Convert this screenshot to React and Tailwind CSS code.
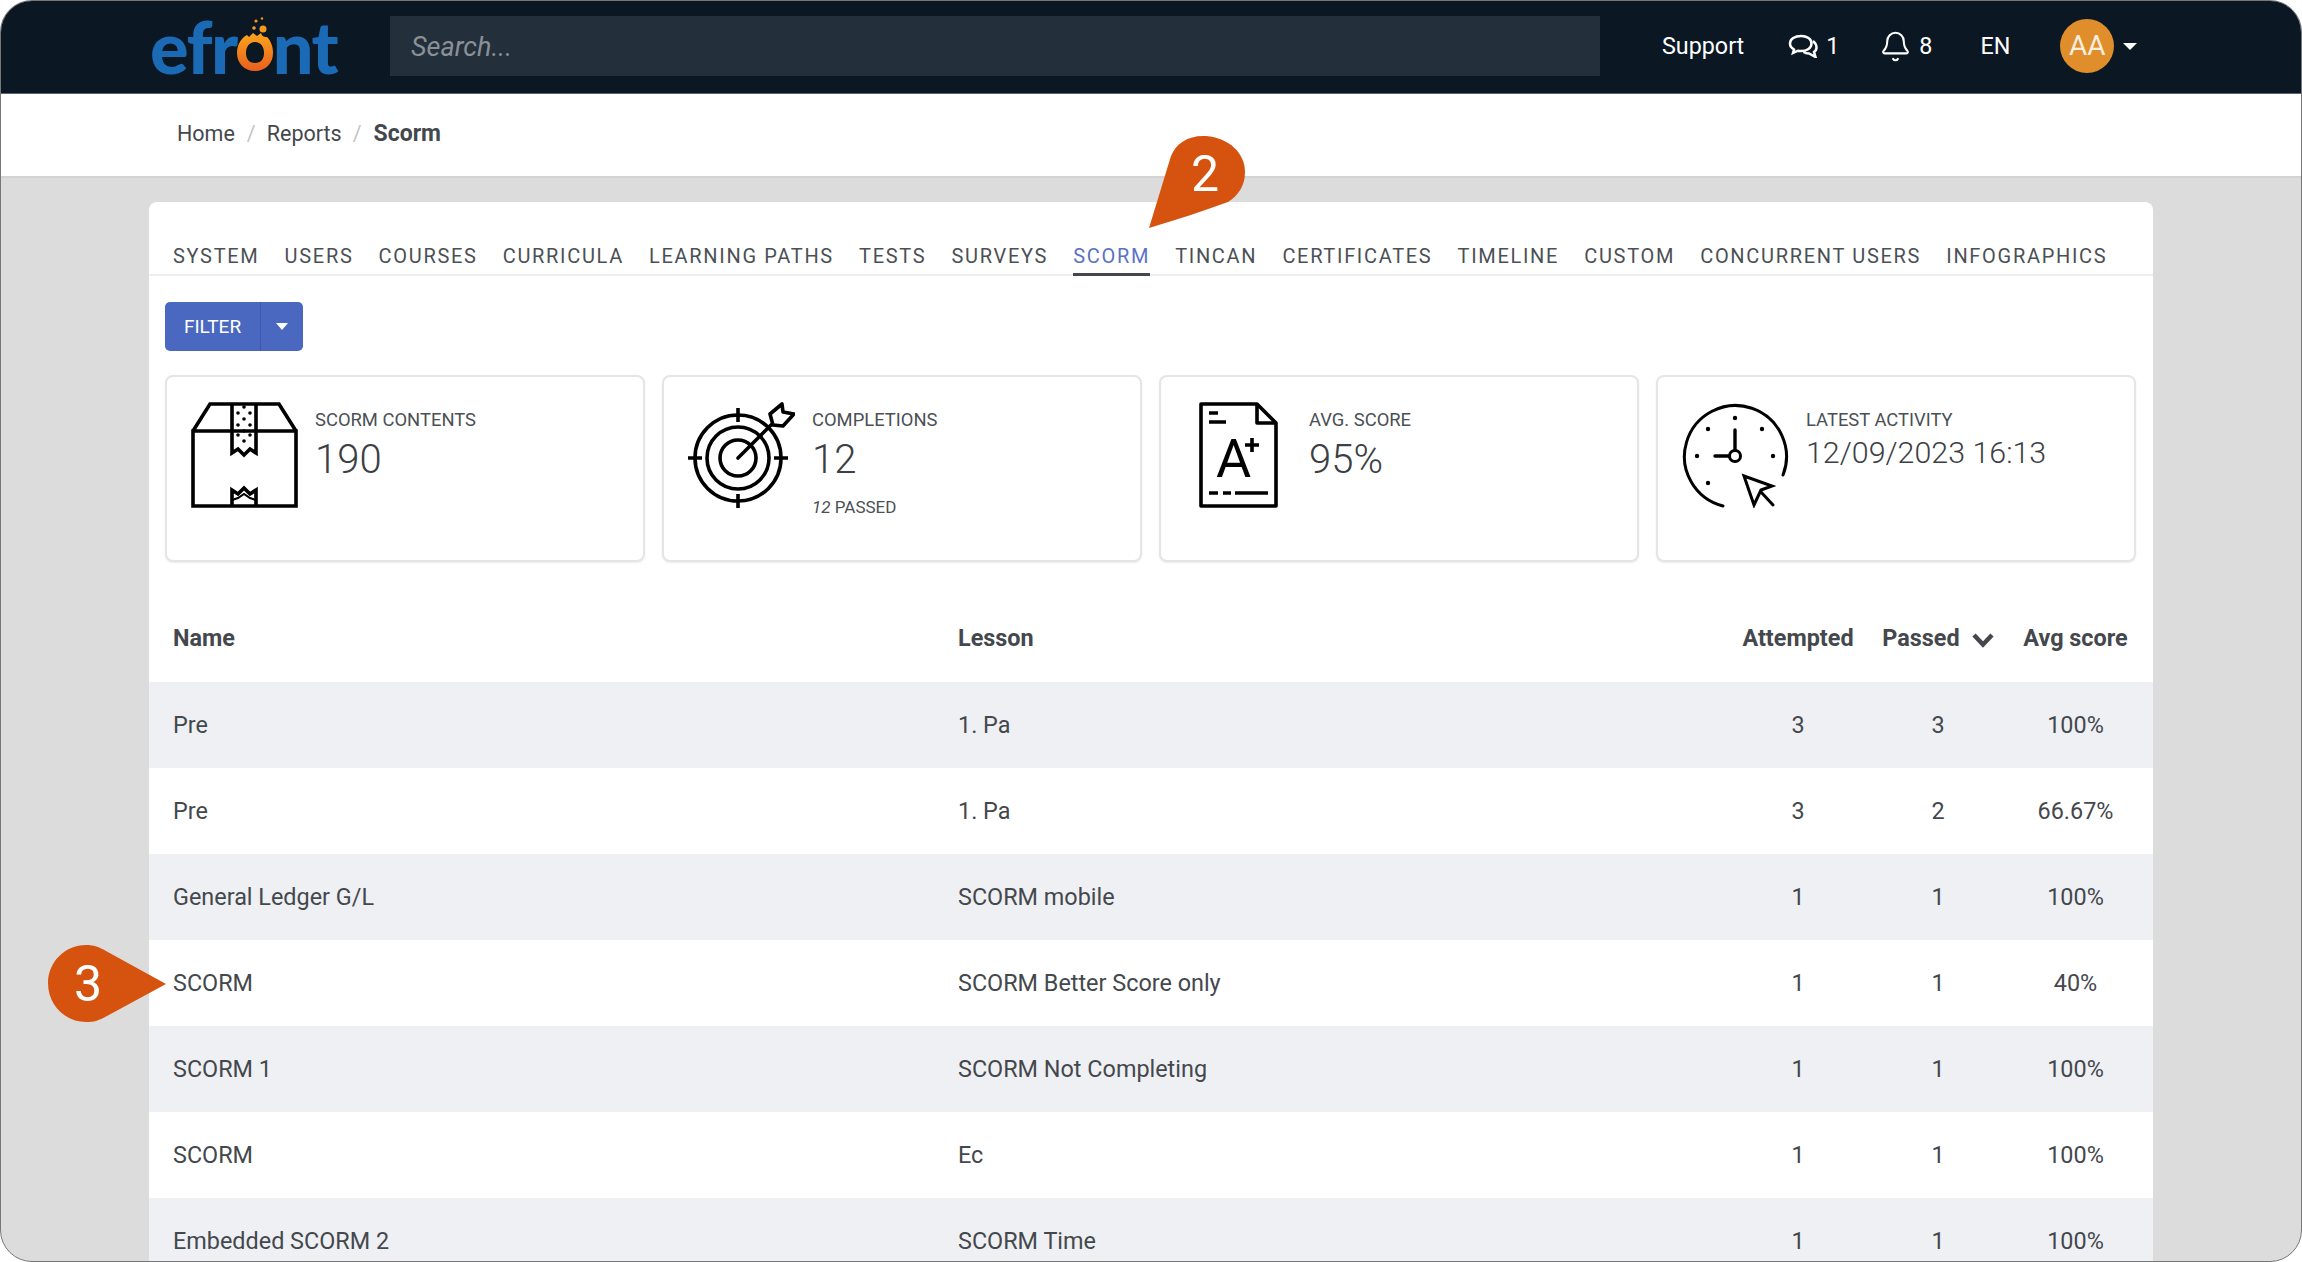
import { Bell } from "lucide-react";

const tabs = ["SYSTEM", "USERS", "COURSES", "CURRICULA", "LEARNING PATHS", "TESTS", "SURVEYS", "SCORM", "TINCAN", "CERTIFICATES", "TIMELINE", "CUSTOM", "CONCURRENT USERS", "INFOGRAPHICS"];

const rows = [
  ["Pre", "1. Pa", "3", "3", "100%"],
  ["Pre", "1. Pa", "3", "2", "66.67%"],
  ["General Ledger G/L", "SCORM mobile", "1", "1", "100%"],
  ["SCORM", "SCORM Better Score only", "1", "1", "40%"],
  ["SCORM 1", "SCORM Not Completing", "1", "1", "100%"],
  ["SCORM", "Ec", "1", "1", "100%"],
  ["Embedded SCORM 2", "SCORM Time", "1", "1", "100%"],
];

const LogoO = () => (
  <svg width="38" height="56" viewBox="0 0 38 56" className="mx-[-1px] self-end">
    <defs>
      <linearGradient id="fire" x1="0" y1="0" x2="0" y2="1">
        <stop offset="0" stopColor="#fba51c" />
        <stop offset="1" stopColor="#e85f1e" />
      </linearGradient>
    </defs>
    <path fillRule="evenodd" fill="url(#fire)" d="M19 54C8 54 1 46 1 36C1 28 5 21 11 18L13 20L17 16L21 19L25 16C26 20 29 20 31 20C35 24 37 30 37 36C37 46 30 54 19 54ZM19 25C13 25 10 30 10 36C10 42 13 46 19 46C25 46 28 42 28 36C28 30 25 25 19 25Z" />
    <circle cx="27" cy="12" r="3.5" fill="#f59a1f" />
    <circle cx="18" cy="11" r="1.8" fill="#f59a1f" />
    <circle cx="20" cy="4" r="1.6" fill="#f59a1f" />
    <circle cx="26" cy="1.5" r="1.2" fill="#f59a1f" />
  </svg>
);

const ChatIcon = () => (
  <svg width="30" height="24" viewBox="0 0 30 24" fill="none" stroke="white" strokeWidth="2.5">
    <path d="M13 2C7 2 2 5 2 9.500C2 12 3.500 14 6 15.500L5 19L10 16.700C11 16.900 12 17 13 17C19 17 23.500 14 23.500 9.500C23.500 5 19 2 13 2Z" />
    <path d="M25 7C27.500 9 28.500 11 28.500 13.500C28.500 15.500 27.500 17 26 18L27.500 23L21 19.500C19 19.500 17 19 15.500 18" />
  </svg>
);

const BoxIcon = () => (
  <svg width="107" height="106" viewBox="0 0 107 106" fill="none" stroke="black" strokeWidth="3.6">
    <path d="M2 29H105V104H2ZM2 29L19 2H88L105 29" />
    <path d="M41 2V51L47 47L53 53L59 47L65 51V2" />
    <path d="M41 104V88L47 92L53 86L59 92L65 88V104" />
    <path d="M41 98L47 96L53 92L59 96L65 98" strokeWidth="2" />
    <g fill="black" stroke="none">
      {[[53, 5], [47, 11], [59, 11], [53, 17], [47, 23], [59, 23], [53, 29], [47, 33], [59, 33], [53, 39]].map(([x, y]) => (
        <circle key={`${x}-${y}`} cx={x} cy={y} r="1.800" />
      ))}
    </g>
  </svg>
);

const TargetIcon = () => (
  <svg width="107" height="106" viewBox="0 0 107 106" fill="none" stroke="black" strokeWidth="3.6">
    <circle cx="50" cy="56" r="43" />
    <circle cx="50" cy="56" r="31" />
    <circle cx="50" cy="56" r="18" />
    <path d="M50 6V20M50 92V106M0 56H14M86 56H100" />
    <path d="M50 56L83 23" strokeLinecap="round" />
    <path d="M82 12L94 2L95 10L106 12L95 24L85 23Z" strokeLinejoin="round" />
  </svg>
);

const DocIcon = () => (
  <svg width="79" height="106" viewBox="0 0 79 106" fill="none" stroke="black" strokeWidth="3.6">
    <path d="M2 2H58L77 21V104H2Z" strokeLinejoin="round" />
    <path d="M58 2V21H77" strokeLinejoin="round" />
    <path d="M10 11H19M10 20H27M10 91H19M24 91H32M36 91H69" />
    <path d="M53 36V50M46 43H60" />
    <text x="17" y="75" fill="black" stroke="none" fontSize="54" fontWeight="400" fontFamily="Roboto, sans-serif">A</text>
  </svg>
);

const ClockIcon = () => (
  <svg width="107" height="106" viewBox="0 0 107 106" fill="none" stroke="black" strokeWidth="3" strokeLinecap="round">
    <path d="M101 73A51 51 0 1 0 41 104" />
    <path d="M53 28V48M33 54H47" strokeWidth="3.400" />
    <circle cx="53" cy="54" r="5.500" />
    <g fill="black" stroke="none">
      {[[53, 16], [80, 27], [91, 54], [26, 27], [15, 54], [26, 81]].map(([x, y]) => (
        <circle key={`${x}-${y}`} cx={x} cy={y} r="2.200" />
      ))}
    </g>
    <path d="M62 74L90 84L79 88L72 103ZM79 90L91 103" strokeLinejoin="miter" />
  </svg>
);

const stats = [
  { icon: <BoxIcon />, label: "SCORM CONTENTS", value: "190" },
  { icon: <TargetIcon />, label: "COMPLETIONS", value: "12", sub: "PASSED" },
  { icon: <DocIcon />, label: "AVG. SCORE", value: "95%" },
  { icon: <ClockIcon />, label: "LATEST ACTIVITY", date: "12/09/2023 16:13" },
];

const StatCard = ({ stat }) => (
  <div className="h-[187px] rounded-lg border-2 border-[#e5e5e5] bg-white pl-[24px] pt-[25px] flex gap-[17px] shadow-[0_1px_2px_rgba(0,0,0,0.08)]">
    <div className="w-[107px] flex justify-center shrink-0">{stat.icon}</div>
    <div>
      <div className="text-[18.400px] leading-[22px] mt-[7px] text-[#4b5055]">{stat.label}</div>
      {stat.value && <div className="text-[40px] leading-[52px] mt-[3px] font-light text-[#3c4044]">{stat.value}</div>}
      {stat.date && <div className="text-[30.400px] leading-[41px] mt-[1px] font-light text-[#3c4044]">{stat.date}</div>}
      {stat.sub && (
        <div className="text-[17px] leading-[20px] mt-[11px] text-[#4b5055]">
          <i>12</i> {stat.sub}
        </div>
      )}
    </div>
  </div>
);

const App = () => {
  return (
    <div className="relative w-[2302px] h-[1262px] overflow-hidden rounded-[32px] border border-[#777777] bg-[#dcdcdc] font-['Roboto',sans-serif] text-[#44484d]">
      <header className="h-[93px] pb-[2px] bg-[#0b1824] border-b border-[#5a646e] flex items-center text-white">
        <div className="ml-[149px] mt-[-3px] w-[240px] flex items-end h-[56px] font-['Lato',sans-serif] font-black text-[#1b6ab5] text-[72px] leading-[54px] tracking-[-1.500px]">
          ef<span>r</span>
          <LogoO />
          nt
        </div>
        <div className="h-[60px] w-[1210px] bg-[#232f3b] flex items-center pl-[21px] pt-[3px] text-[27px] italic text-[#8a9097]">Search...</div>
        <div className="ml-[62px] text-[23.300px]">Support</div>
        <div className="ml-[44px]"><ChatIcon /></div>
        <div className="ml-[8px] text-[23.300px]">1</div>
        <Bell size={33} strokeWidth={1.500} className="ml-[40px]" />
        <div className="ml-[7px] text-[23.300px]">8</div>
        <div className="ml-[48px] text-[23.300px]">EN</div>
        <div className="ml-[50px] w-[54px] h-[54px] rounded-full bg-[#e08e2b] flex items-center justify-center text-[28px] text-[#f8eee0]">AA</div>
        <div className="ml-[9px] w-0 h-0 border-x-[7px] border-x-transparent border-t-[7px] border-t-white" />
      </header>

      <nav className="h-[84px] bg-white border-b-2 border-[#d3d3d3] flex items-center pb-[2px] pl-[176px] text-[21.500px]">
        <span>Home</span>
        <span className="ml-[12px] mr-[11px] text-[#c4c4c4]">/</span>
        <span>Reports</span>
        <span className="ml-[11px] mr-[12px] text-[#c4c4c4]">/</span>
        <span className="font-bold text-[23px]">Scorm</span>
      </nav>

      <main className="ml-[148px] mt-[24px] w-[2004px] h-[1100px] bg-white rounded-t-lg">
        <div className="h-[74px] pl-[24px] flex items-end gap-[25.100px] border-b-2 border-[#eeeeee] text-[20px] tracking-[1.690px] text-[#4b5055]">
          {tabs.map((tab) => (
            <div key={tab} className={tab === "SCORM" ? "pb-[2px] mb-[-2px] border-b-[3px] border-[#44484d] text-[#5b72c4]" : "pb-[5px] mb-[-2px]"}>
              {tab}
            </div>
          ))}
        </div>

        <div className="ml-[16px] mt-[26px] w-[138px] h-[49px] rounded-[5px] bg-[#4a68c0] flex text-white text-[19px]">
          <div className="w-[96px] pt-[1px] flex items-center justify-center border-r border-[#3d58a8]">FILTER</div>
          <div className="flex-1 flex items-center justify-center">
            <div className="w-0 h-0 border-x-[6px] border-x-transparent border-t-[7px] border-t-white" />
          </div>
        </div>

        <div className="ml-[16px] mr-[17px] mt-[24px] grid grid-cols-4 gap-[17px]">
          {stats.map((stat) => (
            <StatCard key={stat.label} stat={stat} />
          ))}
        </div>

        <table className="mt-[31px] w-full table-fixed text-[23.400px]">
          <colgroup>
            <col className="w-[784px]" />
            <col className="w-[785px]" />
            <col className="w-[160px]" />
            <col className="w-[120px]" />
            <col className="w-[155px]" />
          </colgroup>
          <thead>
            <tr className="h-[89px] font-bold">
              <th className="pl-[24px] pt-[2px] text-left">Name</th>
              <th className="pl-[25px] pt-[2px] text-left">Lesson</th>
              <th className="pt-[2px]">Attempted</th>
              <th className="pt-[2px]">
                <span className="inline-flex items-center gap-[12px]">
                  Passed
                  <svg width="22" height="15" viewBox="0 0 22 15" fill="none" stroke="#44484d" strokeWidth="4.500" className="mt-[4px]">
                    <path d="M2 2L11 11.500L20 2" />
                  </svg>
                </span>
              </th>
              <th className="pt-[2px]">Avg score</th>
            </tr>
          </thead>
          <tbody>
            {rows.map((row, i) => (
              <tr key={i} className={i % 2 === 0 ? "h-[86px] bg-[#eff0f4]" : "h-[86px]"}>
                <td className="pl-[24px] pt-[2px]">{row[0]}</td>
                <td className="pl-[25px] pt-[2px]">{row[1]}</td>
                <td className="text-center pt-[2px]">{row[2]}</td>
                <td className="text-center pt-[2px]">{row[3]}</td>
                <td className="text-center pt-[2px]">{row[4]}</td>
              </tr>
            ))}
          </tbody>
        </table>
      </main>

      {/* numbered callouts lying over the page */}
      <div className="absolute left-[1148px] top-[134px]">
        <svg width="100" height="96" viewBox="0 0 100 96">
          <path d="M0 93L22 21C27 8 40 0 57 1C80 3 96 18 96 37C96 50 90 60 79 67C54 76 27 85 0 93Z" fill="#d6530f" />
        </svg>
        <span className="absolute left-[42px] top-[3px] text-[50px] leading-[72px] text-white">2</span>
      </div>
      <div className="absolute left-[47px] top-[944px]">
        <svg width="120" height="78" viewBox="0 0 120 78">
          <path d="M118 39L59 71C50 76 46 77 38 77C17 77 0 60 0 38C0 17 17 0 38 0C46 0 51 2 58 6Z" fill="#d6530f" />
        </svg>
        <span className="absolute left-[26px] top-[3px] text-[50px] leading-[72px] text-white">3</span>
      </div>
    </div>
  );
};

export default App;
